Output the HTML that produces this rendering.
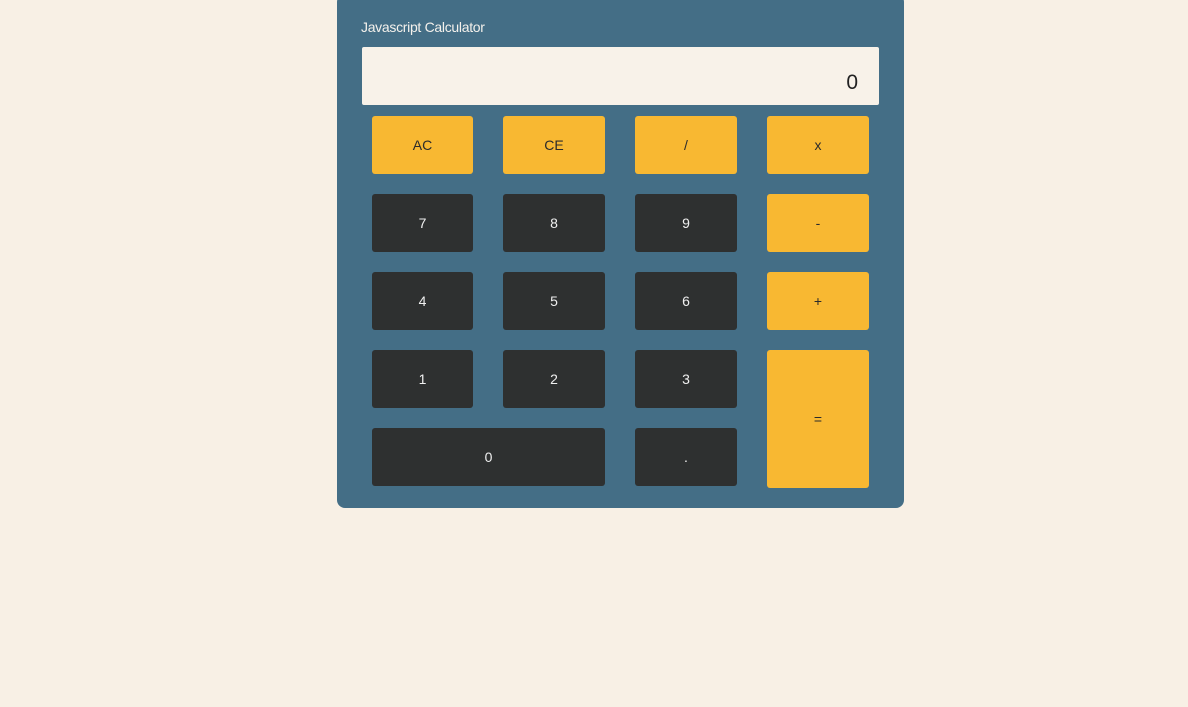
<!DOCTYPE html>
<html><head><style>
body{margin:0;background:#f8f0e5;font-family:"Liberation Sans",sans-serif;}
.p{position:absolute;left:337px;top:-6px;width:567px;height:514px;background:#446e86;border-radius:8px;}
.t{position:absolute;left:361px;top:19px;color:#f4f1ec;font-size:14px;letter-spacing:-0.3px}
.d{position:absolute;left:362px;top:47px;width:517px;height:58px;background:#f8f2e9;border-radius:2px;}
.d span{position:absolute;right:21px;top:24px;font-size:21px;color:#222;}
.b{position:absolute;display:flex;align-items:center;justify-content:center;font-size:14px;border-radius:3px;}
.y{background:#f8b832;color:#2b2b2b}.k{background:#2e3030;color:#f0f0f0}
</style></head><body>
<div class="p"></div>
<div class="t">Javascript Calculator</div>
<div class="d"><span>0</span></div>
<div class="b y" style="left:372px;top:116px;width:101px;height:58px">AC</div>
<div class="b y" style="left:503px;top:116px;width:102px;height:58px">CE</div>
<div class="b y" style="left:635px;top:116px;width:102px;height:58px">/</div>
<div class="b y" style="left:767px;top:116px;width:102px;height:58px">x</div>
<div class="b k" style="left:372px;top:194px;width:101px;height:58px">7</div>
<div class="b k" style="left:503px;top:194px;width:102px;height:58px">8</div>
<div class="b k" style="left:635px;top:194px;width:102px;height:58px">9</div>
<div class="b y" style="left:767px;top:194px;width:102px;height:58px">-</div>
<div class="b k" style="left:372px;top:272px;width:101px;height:58px">4</div>
<div class="b k" style="left:503px;top:272px;width:102px;height:58px">5</div>
<div class="b k" style="left:635px;top:272px;width:102px;height:58px">6</div>
<div class="b y" style="left:767px;top:272px;width:102px;height:58px">+</div>
<div class="b k" style="left:372px;top:350px;width:101px;height:58px">1</div>
<div class="b k" style="left:503px;top:350px;width:102px;height:58px">2</div>
<div class="b k" style="left:635px;top:350px;width:102px;height:58px">3</div>
<div class="b y" style="left:767px;top:350px;width:102px;height:138px">=</div>
<div class="b k" style="left:372px;top:428px;width:233px;height:58px">0</div>
<div class="b k" style="left:635px;top:428px;width:102px;height:58px">.</div>
</body></html>
